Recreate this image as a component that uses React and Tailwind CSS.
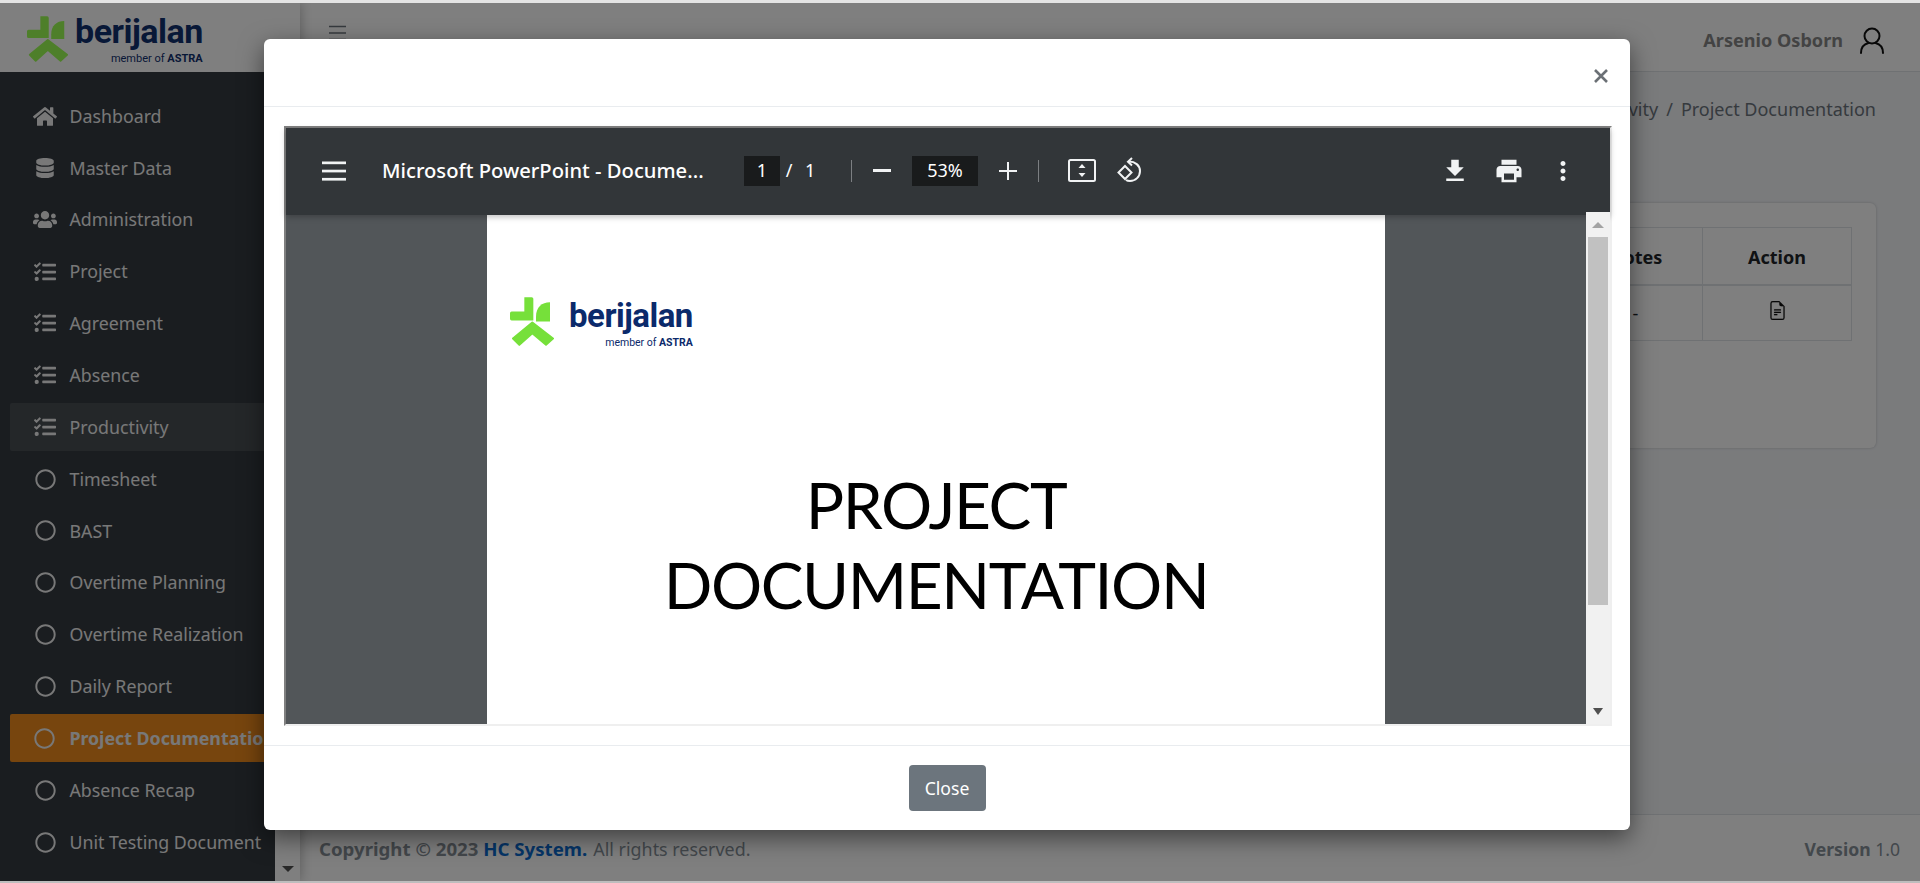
import React from "react";
import { FaHome, FaDatabase, FaUsers, FaTasks, FaRegCircle } from "react-icons/fa";
import { BsFileEarmarkText } from "react-icons/bs";

const menu = [
  ["Dashboard", FaHome, 25],
  ["Master Data", FaDatabase, 20],
  ["Administration", FaUsers, 27],
  ["Project", FaTasks, 22],
  ["Agreement", FaTasks, 22],
  ["Absence", FaTasks, 22],
  ["Productivity", FaTasks, 22, "hover"],
  ["Timesheet", FaRegCircle, 21],
  ["BAST", FaRegCircle, 21],
  ["Overtime Planning", FaRegCircle, 21],
  ["Overtime Realization", FaRegCircle, 21],
  ["Daily Report", FaRegCircle, 21],
  ["Project Documentation", FaRegCircle, 21, "active"],
  ["Absence Recap", FaRegCircle, 21],
  ["Unit Testing Document", FaRegCircle, 21],
];

function Mark({ className, color }) {
  return (
    <svg viewBox="0 0 132 146" className={className} fill={color}>
      <path d="M45 0h20a5 5 0 0 1 5 5v65H5a5 5 0 0 1-5-5V48a5 5 0 0 1 5-5h38V0z" />
      <path d="M120 15v58H78V58C78 30 95 15 120 15z" />
      <path d="M67 76L129 124L108 143L67 108L28 143L9 124Z" stroke={color} strokeWidth="6" strokeLinejoin="round" />
    </svg>
  );
}

function Word({ big, small, navy, subGap }) {
  return (
    <div className="flex flex-col items-end" style={{ color: navy }}>
      <span className={`font-['Roboto',sans-serif] font-bold leading-none ${big}`}>berijalan</span>
      <span className={`font-['Roboto',sans-serif] leading-none whitespace-nowrap ${small} ${subGap}`}>
        member of <b>ASTRA</b>
      </span>
    </div>
  );
}

function Sidebar() {
  return (
    <aside className="w-[300px] shrink-0 flex flex-col z-10 shadow-[0_0_12px_rgba(0,0,0,0.3)]">
      <div className="h-[69px] bg-white flex items-start pl-[27px] pt-[13px] gap-[7px] shrink-0">
        <Mark className="w-[41px] h-[46px]" color="#9dff55" />
        <Word big="text-[34px] -mt-[2px] tracking-[-0.5px]" small="text-[11px]" navy="#10306f" subGap="mt-[5px]" />
      </div>
      <div className="flex-1 flex min-h-0">
        <nav className="w-[275px] bg-[#343a40] pt-[20px] pl-[10px] flex flex-col gap-[3.86px] font-['Noto_Sans',sans-serif] text-[17.8px] text-[#f0f0f0] whitespace-nowrap">
          {menu.map(([label, Icon, size, state]) => (
            <div
              key={label}
              className={`h-[48px] flex items-center pl-[23px] gap-[12.500px] rounded-[2px] ${
                state === "active" ? "bg-[#ee8a1c] font-bold" : state === "hover" ? "bg-white/10" : ""
              }`}
            >
              <span className="w-[24px] flex justify-center">
                <Icon size={size} />
              </span>
              <span>{label}</span>
            </div>
          ))}
        </nav>
        <div className="w-[25px] bg-white flex flex-col justify-end items-center pb-[9px]">
          <div className="w-0 h-0 border-x-[6px] border-x-transparent border-t-[6px] border-t-[#505050]" />
        </div>
      </div>
    </aside>
  );
}

function Main() {
  return (
    <main className="flex-1 min-w-0 flex flex-col bg-[#f4f6f9] font-['Noto_Sans',sans-serif] text-[18px] text-[#212529]">
      <header className="h-[69px] shrink-0 bg-white border-b border-[#dee2e6] flex items-center pl-[29px] pr-[35px]">
        <svg width="17" height="16" viewBox="0 0 17 16" className="-mt-[8px]" stroke="#6c757d" strokeWidth="1.600">
          <path d="M0 1.500h17M0 8h17M0 14.500h17" />
        </svg>
        <span className="ml-auto font-bold text-[#878787] text-[18.100px] mt-[7px]">Arsenio Osborn</span>
        <svg width="26" height="28" viewBox="0 0 26 28" fill="none" stroke="#111" strokeWidth="2" strokeLinecap="round" className="ml-[16px] mt-[8px]">
          <circle cx="13" cy="9" r="7.500" />
          <path d="M2 26c0-6 3.500-9 7.500-10M24 26c0-6-3.500-9-7.500-10" />
        </svg>
      </header>
      <div className="flex-1 min-h-0 pr-[44px] pl-[24px] pt-[24px]">
        <div className="flex justify-end gap-[8px] text-[#6c757d] leading-[26px]">
          <span>Productivity</span>
          <span>/</span>
          <span>Project Documentation</span>
        </div>
        <section className="mt-[81px] h-[245px] bg-white rounded-[6px] shadow-[0_0_3px_rgba(0,0,0,0.2)] p-[24px]">
          <table className="w-full border-collapse text-center">
            <thead>
              <tr className="h-[57px] font-bold">
                <th className="border border-[#dee2e6] border-b-2"></th>
                <th className="w-[134px] border border-[#dee2e6] border-b-2 pt-[3px]">Notes</th>
                <th className="w-[149px] border border-[#dee2e6] border-b-2 pt-[3px]">Action</th>
              </tr>
            </thead>
            <tbody>
              <tr className="h-[56px]">
                <td className="border border-[#dee2e6]"></td>
                <td className="border border-[#dee2e6] pt-[2px]">-</td>
                <td className="border border-[#dee2e6]">
                  <BsFileEarmarkText size={19} className="mx-auto -mt-[5px] text-[#111]" strokeWidth="0.1" />
                </td>
              </tr>
            </tbody>
          </table>
        </section>
      </div>
      <footer className="h-[67px] shrink-0 bg-white border-t border-[#dee2e6] flex items-center pl-[19px] pr-[20px] pt-[2px] text-[#869099]">
        <span className="font-bold text-[#868e96] text-[18.650px]">
          Copyright © 2023 <span className="text-[#0a6bd0]">HC System.</span>
        </span>
        <span className="ml-[6px] text-[17.900px]">All rights reserved.</span>
        <span className="ml-auto text-[17.600px]">
          <b>Version</b> 1.0
        </span>
      </footer>
    </main>
  );
}

const G = ({ d, size = 30, className = "" }) => (
  <svg width={size} height={size} viewBox="0 0 24 24" fill="#f1f3f4" className={className}>
    <path d={d} />
  </svg>
);

function PdfToolbar() {
  return (
    <div className="relative z-10 h-[87px] pb-[2px] shrink-0 bg-[#323639] text-white flex items-center shadow-[0_2px_6px_rgba(0,0,0,0.25)] font-['Noto_Sans',sans-serif] text-[18px]">
      <svg width="24" height="20" viewBox="0 0 24 20" fill="#f1f3f4" className="ml-[36px]">
        <rect y="0.500" width="24" height="2.700" />
        <rect y="8.700" width="24" height="2.700" />
        <rect y="16.900" width="24" height="2.700" />
      </svg>
      <span className="ml-[36px] w-[320px] font-medium text-[20.200px] whitespace-nowrap">Microsoft PowerPoint - Docume...</span>
      <span className="ml-[42px] w-[36px] h-[30px] bg-[#191b1c] flex items-center justify-center">1</span>
      <span className="ml-[5px] w-[8px] text-center">/</span>
      <span className="ml-[12px] w-[10px] text-center">1</span>
      <span className="ml-[36px] w-[1px] h-[22px] bg-[#7c7f82]" />
      <span className="ml-[21px] w-[18px] h-[2.500px] bg-[#f1f3f4]" />
      <span className="ml-[21px] w-[66px] h-[30px] bg-[#191b1c] flex items-center justify-center">53%</span>
      <svg width="20" height="20" viewBox="0 0 20 20" stroke="#f1f3f4" strokeWidth="2" className="ml-[20px]">
        <path d="M10 1v18M1 10h18" />
      </svg>
      <span className="ml-[20px] w-[1px] h-[22px] bg-[#7c7f82]" />
      <svg width="28" height="23" viewBox="0 0 28 23" className="ml-[29px]">
        <rect x="1" y="1" width="26" height="21" rx="1.500" fill="none" stroke="#f1f3f4" strokeWidth="2" />
        <path d="M14 5l3.500 4h-7zM14 18l-3.500-4h7z" fill="#f1f3f4" />
      </svg>
      <svg width="28" height="28" viewBox="0 0 28 28" fill="none" stroke="#f1f3f4" strokeWidth="2" className="ml-[20px]">
        <path d="M9 9l6.500 6.500L9 22l-6.500-6.500z" />
        <path d="M13 4.500c6 0 11 3.800 11 9.500s-4.500 10-10 10c-1.500 0-3-.3-4-1" />
        <path d="M16 1l-4 3.700 4 3.700" />
      </svg>
      <div className="ml-auto flex items-center gap-[24px] pr-[32px]">
        <G d="M19 9h-4V3H9v6H5l7 7 7-7zM5 18v2h14v-2H5z" />
        <G d="M19 8H5c-1.660 0-3 1.340-3 3v6h4v4h12v-4h4v-6c0-1.660-1.340-3-3-3zm-3 11H8v-5h8v5zm3-7c-.550 0-1-.450-1-1s.450-1 1-1 1 .450 1 1-.450 1-1 1zm-1-9H6v4h12V3z" />
        <G d="M12 8c1.100 0 2-.900 2-2s-.900-2-2-2-2 .900-2 2 .900 2 2 2zm0 2c-1.100 0-2 .900-2 2s.900 2 2 2 2-.900 2-2-.900-2-2-2zm0 6c-1.100 0-2 .900-2 2s.900 2 2 2 2-.900 2-2-.900-2-2-2z" />
      </div>
    </div>
  );
}

function PdfPage() {
  return (
    <div className="w-[898px] h-full bg-white overflow-hidden pt-[82px]">
      <div className="flex items-start pl-[23px] gap-[15px]">
        <Mark className="w-[44px] h-[49px]" color="#76e03a" />
        <Word big="text-[33px] mt-[2px] tracking-[-0.5px]" small="text-[10.500px]" navy="#0b2a6b" subGap="mt-[6px]" />
      </div>
      <div className="mt-[116px] text-center font-['Lato',sans-serif] text-[64px] tracking-[-1.400px] leading-[80px] text-black">
        <div>PROJECT</div>
        <div>DOCUMENTATION</div>
      </div>
    </div>
  );
}

function Scrollbar() {
  return (
    <div className="relative z-20 -mt-[3px] w-[24px] shrink-0 bg-[#f1f1f1] flex flex-col items-center">
      <div className="h-[25px] flex items-center justify-center shrink-0">
        <div className="w-0 h-0 border-x-[6px] border-x-transparent border-b-[6px] border-b-[#a3a3a3]" />
      </div>
      <div className="w-[20px] h-[368px] bg-[#c1c1c1] shrink-0" />
      <div className="mt-auto h-[25px] flex items-center justify-center shrink-0">
        <div className="w-0 h-0 border-x-[5px] border-x-transparent border-t-[7px] border-t-[#505050]" />
      </div>
    </div>
  );
}

function Modal() {
  return (
    <div className="absolute left-[264px] top-[39px] w-[1366px] h-[791px] bg-white rounded-[6px] shadow-[0_8px_24px_rgba(0,0,0,0.5)] flex flex-col font-['Noto_Sans',sans-serif]">
      <div className="h-[68px] shrink-0 border-b border-[#e9ecef] flex items-center justify-end pr-[22px] pt-[6px]">
        <svg width="14" height="14" viewBox="0 0 14 14" stroke="#6b7075" strokeWidth="2.600">
          <path d="M1 1l12 12M13 1L1 13" />
        </svg>
      </div>
      <div className="shrink-0 h-[638px] pl-[20px] pr-[18px] pt-[19px] pb-[19px]">
        <div className="h-[600px] border-2 border-t-[#808080] border-l-[#808080] border-r-[#efefef] border-b-[#efefef] flex flex-col">
          <PdfToolbar />
          <div className="flex-1 min-h-0 flex">
            <div className="flex-1 bg-[#525659] flex justify-center min-h-0">
              <PdfPage />
            </div>
            <Scrollbar />
          </div>
        </div>
      </div>
      <div className="flex-1 border-t border-[#e9ecef] flex items-center justify-center">
        <button className="w-[77px] h-[46px] bg-[#6c757d] text-white rounded-[4px] text-[17.600px]">Close</button>
      </div>
    </div>
  );
}

export default function App() {
  return (
    <div className="relative w-[1920px] h-[883px] overflow-hidden flex flex-col">
      <div className="h-[3px] shrink-0 bg-[#e4e4e4] relative z-30" />
      <div className="flex-1 min-h-0 flex">
        <Sidebar />
        <Main />
      </div>
      <div className="h-[2px] shrink-0 bg-[#bdbdbd] relative z-30" />
      <div className="absolute inset-x-0 top-[3px] bottom-[2px] z-20 bg-black/50" />
      <div className="absolute inset-0 z-30">
        <Modal />
      </div>
    </div>
  );
}
